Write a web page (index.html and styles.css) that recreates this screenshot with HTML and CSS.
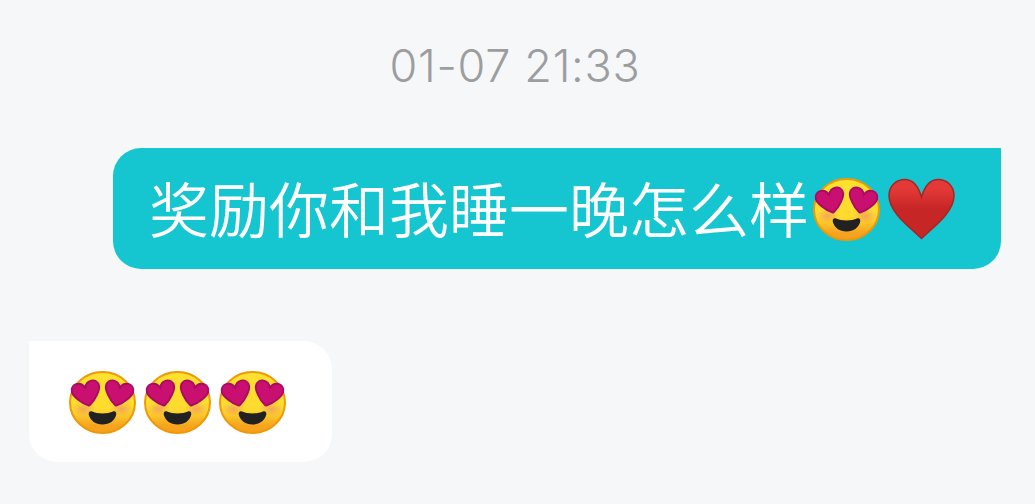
FILE: index.html
```html
<!DOCTYPE html>
<html lang="zh">
<head>
<meta charset="utf-8">
<title>Chat</title>
<link rel="stylesheet" href="styles.css">
</head>
<body>
<svg class="defs" width="0" height="0" aria-hidden="true">
  <defs>
    <linearGradient id="faceFill" x1="0" y1="0" x2="0" y2="1">
      <stop offset="0" stop-color="#fee12f"/>
      <stop offset="0.62" stop-color="#fedb2e"/>
      <stop offset="0.88" stop-color="#f6a41f"/>
      <stop offset="1" stop-color="#f6a01e"/>
    </linearGradient>
    <linearGradient id="heartFill" x1="0" y1="0" x2="0" y2="1">
      <stop offset="0.15" stop-color="#e43a37"/>
      <stop offset="0.5" stop-color="#c62626"/>
      <stop offset="1" stop-color="#c62626"/>
    </linearGradient>
    <radialGradient id="blush">
      <stop offset="0" stop-color="#ef7a78" stop-opacity="0.55"/>
      <stop offset="1" stop-color="#ef7a78" stop-opacity="0"/>
    </radialGradient>
    <path id="eye" d="M-1 12C-7 8.500-14-.5-14-4.500C-14-9-11-11.500-7.500-11.500C-4-11.500-1.200-9 0-6C1.200-9 4-11.500 7.500-11.500C11-11.500 14-9 14-4.500C14-.5 7 8.500 1 12Q0 12.700-1 12Z"/>
    <symbol id="face" viewBox="0 0 75 75">
      <g transform="translate(-1 1)">
        <ellipse cx="37.500" cy="37.500" rx="32.500" ry="30.500" fill="url(#faceFill)" stroke="#ee9a08" stroke-width="2"/>
        <ellipse cx="18.500" cy="44" rx="12" ry="7" fill="url(#blush)"/>
        <ellipse cx="56.500" cy="44" rx="12" ry="7" fill="url(#blush)"/>
        <use href="#eye" transform="translate(21.500 28.500) rotate(-13)" fill="#c91070" stroke="#a90a62" stroke-width="1.800"/>
        <use href="#eye" transform="translate(53.500 28.500) rotate(13)" fill="#c91070" stroke="#a90a62" stroke-width="1.800"/>
        <path d="M27 46.500C32 49 43 49 48 46.500C50.500 45.500 52 48 51 50.500C49.500 55.500 44.500 59.500 37.500 59.500C30.500 59.500 25.500 55.500 24 50.500C23 48 24.500 45.500 27 46.500Z" fill="#212121"/>
      </g>
    </symbol>
    <symbol id="heart" viewBox="0 0 75 75">
      <path d="M36.500 67.500C26 57 4 42 4 24.500C4 15 11 8.500 20 8.500C28 8.500 33.500 16 36.500 26C39.500 16 45 8.500 53 8.500C62 8.500 69 15 69 24.500C69 42 47 57 36.500 67.500Z" fill="url(#heartFill)" stroke="#a92323" stroke-width="1.500"/>
    </symbol>
  </defs>
</svg>
<main class="chat">
  <p class="time">01-07 21:33</p>
  <div class="row row-out">
    <div class="bubble bubble-out">
      <span class="text">奖励你和我睡一晚怎么样</span>
      <svg class="emoji"><use href="#face"/></svg>
      <svg class="emoji"><use href="#heart"/></svg>
    </div>
  </div>
  <div class="row row-in">
    <div class="bubble bubble-in">
      <svg class="emoji"><use href="#face"/></svg>
      <svg class="emoji"><use href="#face"/></svg>
      <svg class="emoji"><use href="#face"/></svg>
    </div>
  </div>
</main>
</body>
</html>
```
FILE: styles.css
```css
* { box-sizing: border-box; }
html, body { margin: 0; height: 100%; }
body {
  background: #f6f7f9;
  overflow: hidden;
  font-family: "Noto Sans CJK SC", "Noto Sans", sans-serif;
}
.defs { position: absolute; }
.chat {
  display: flex;
  flex-direction: column;
  padding: 35px 34px 0 29px;
}
.time {
  margin: 0 0 51px;
  height: 62px;
  line-height: 62px;
  text-align: center;
  font-family: Inter, "Liberation Sans", sans-serif;
  font-weight: 350;
  font-size: 45px;
  letter-spacing: 0.7px;
  color: #9c9d9f;
}
.row { display: flex; }
.row-out { justify-content: flex-end; margin-bottom: 72px; }
.row-in { justify-content: flex-start; }
.bubble {
  display: flex;
  align-items: center;
  height: 121px;
  border-radius: 28px;
}
.bubble-out {
  width: 888px;
  padding-left: 36px;
  background: #15c6d0;
  border-top-right-radius: 0;
}
.bubble-in {
  width: 303px;
  padding-left: 37px;
  background: #fff;
  border-top-left-radius: 0;
}
.text {
  margin: 0 1px 4px 0;
  font-size: 60px;
  font-weight: 350;
  line-height: 1;
  color: #fff;
  white-space: nowrap;
}
.emoji { display: block; width: 75px; height: 75px; flex: none; }
```
